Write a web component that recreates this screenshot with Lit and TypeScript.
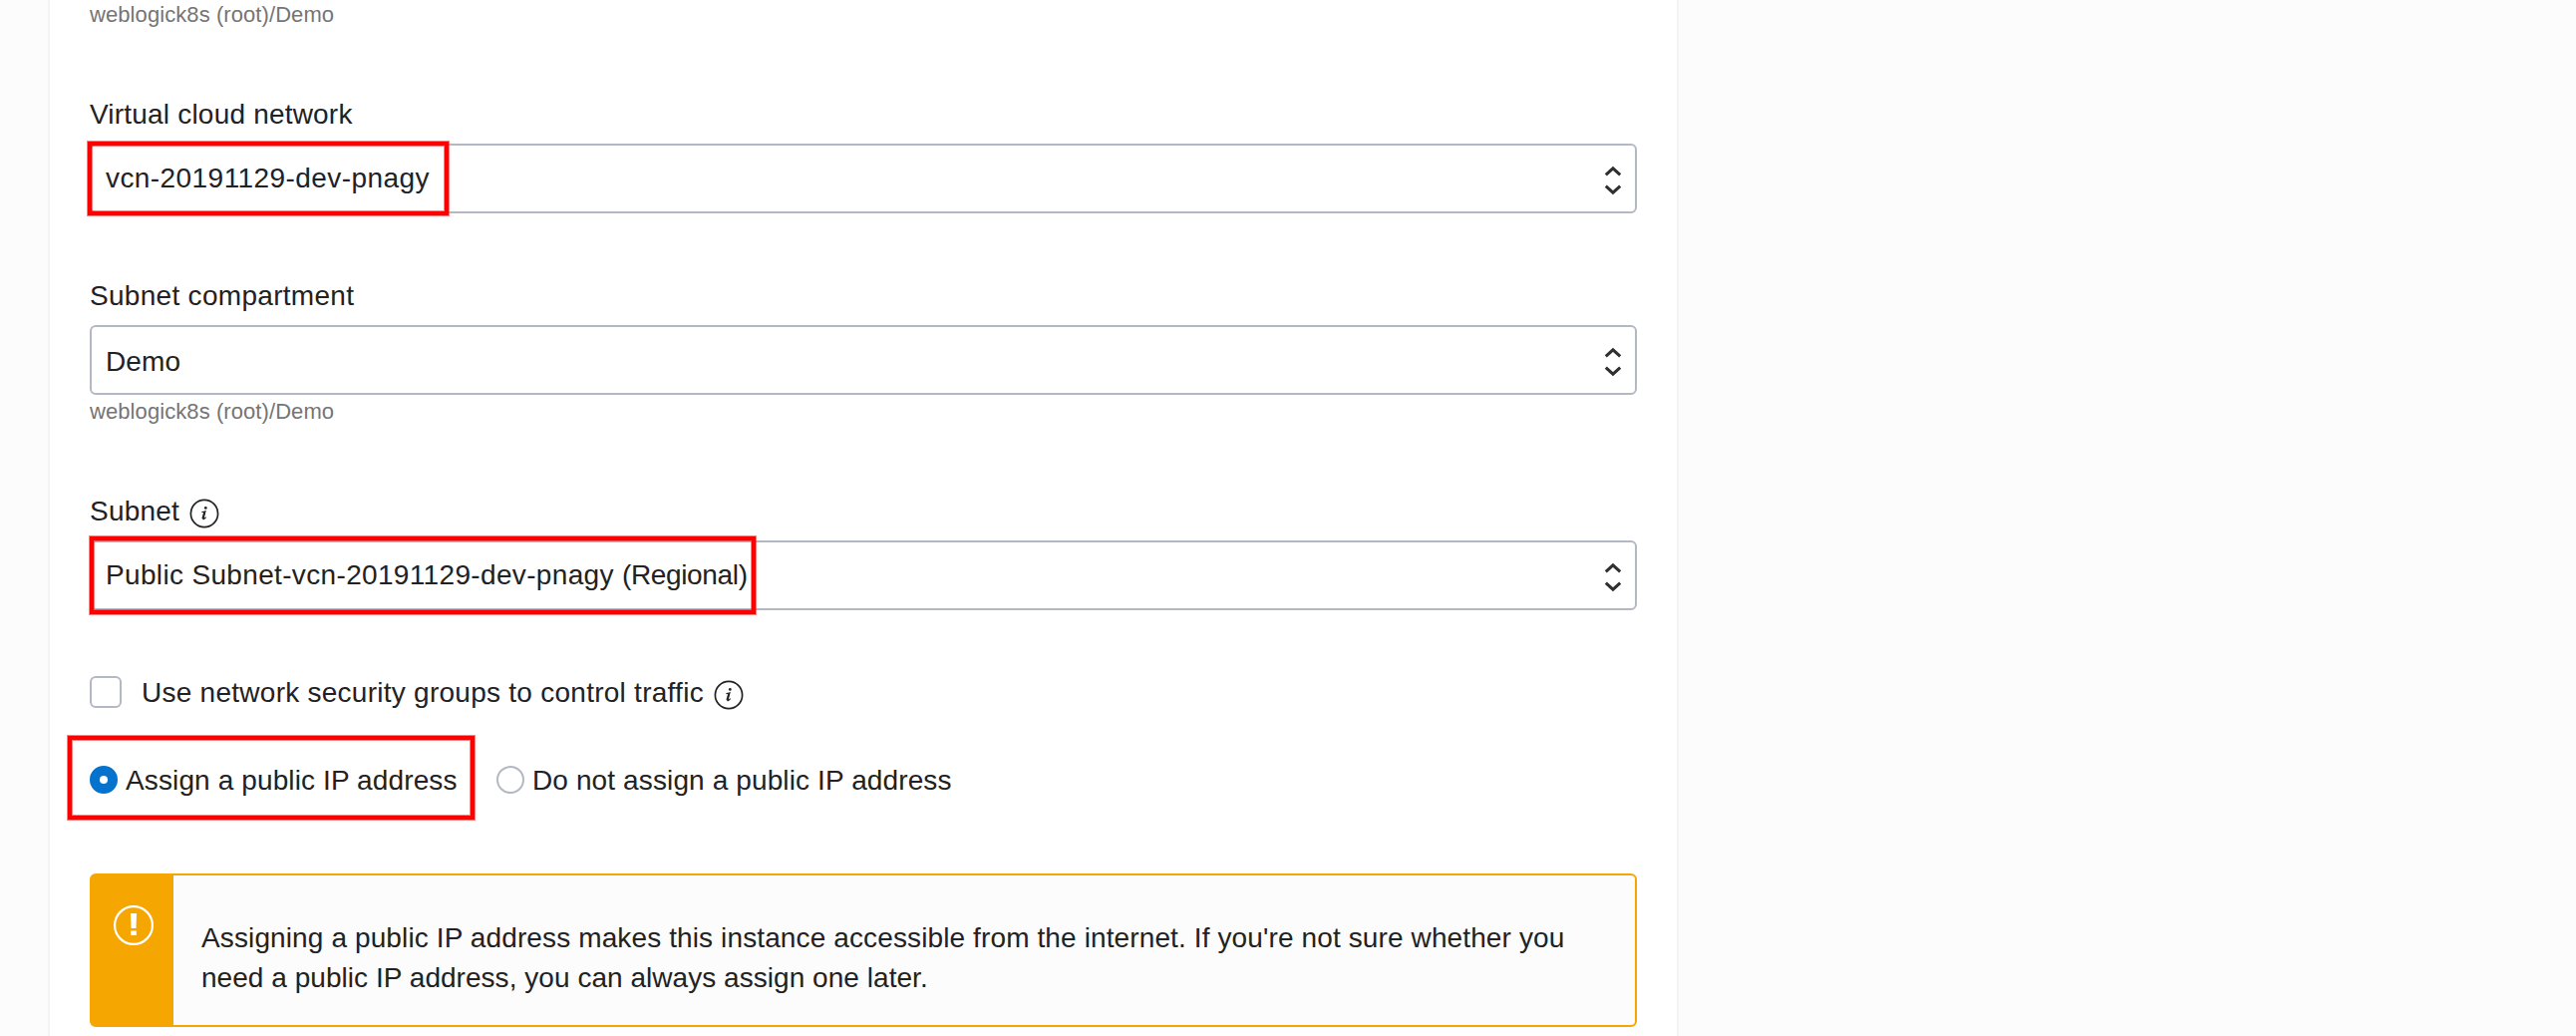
import { LitElement, html, css, svg } from "lit";
import { customElement, property } from "lit/decorators.js";

@customElement("info-icon")
export class InfoIcon extends LitElement {
  static styles = css`
    :host { display: block; width: 30px; height: 30px; flex: none; }
    svg { display: block; }
  `;
  render() {
    return html`<svg width="30" height="30" viewBox="0 0 30 30" fill="none">
      <circle cx="15" cy="15" r="13.6" stroke="#222" stroke-width="1.7" />
      <circle cx="16.3" cy="9.4" r="1.4" fill="#222" />
      <path d="M12.4 13.7 C13.6 13.4 14.8 13.1 16 12.7 L14 19.8 C13.7 21 14.3 21.1 16.6 18.6" stroke="#222" stroke-width="1.2" />
      <path d="M15.2 13.2 L13.3 20.3" stroke="#222" stroke-width="1.8" />
    </svg>`;
  }
}

@customElement("select-field")
export class SelectField extends LitElement {
  @property() value = "";
  @property() suffix = "";
  static styles = css`
    :host { display: block; }
    .box {
      box-sizing: border-box; height: 70px; border: 2px solid #b3b8c3; border-radius: 6px;
      background: #fff; display: flex; align-items: center; justify-content: space-between;
      padding: var(--drop, 0) 13px 0 14px;
    }
    .value { line-height: 40px; white-space: pre; margin-top: -1px; }
    .suffix { letter-spacing: -0.35px; }
    .arrows { display: block; flex: none; margin-top: calc(4px - var(--drop, 0px)); }
  `;
  render() {
    return html`<div class="box">
      <span class="value">${this.value}<span class="suffix">${this.suffix}</span></span>
      <svg class="arrows" width="18" height="30" viewBox="0 0 18 30" fill="none">
        ${svg`<path d="M1.8 9.3 L9 2.9 L16.2 9.3 M1.8 20.7 L9 27.1 L16.2 20.7" stroke="#303030" stroke-width="3.1"/>`}
      </svg>
    </div>`;
  }
}

@customElement("app-root")
export class AppRoot extends LitElement {
  static styles = css`
    :host {
      display: block; height: 1039px; overflow: hidden; background: #fcfcfc; color: #222;
      font: 28px "Liberation Sans", Arial, sans-serif; letter-spacing: 0.3px;
    }
    .panel {
      box-sizing: border-box; width: 1636px; height: 1039px; margin-left: 48px; padding: 0 40px;
      background: #fff; border: solid #f4f4f4; border-width: 0 2px; position: relative;
    }
    .hint { height: 28px; font-size: 22px; line-height: 30px; color: #757575; white-space: nowrap; letter-spacing: 0.08px; }
    .below { margin-top: 2px; }
    .label { height: 40px; line-height: 42px; white-space: nowrap; display: flex; }
    .vcn { margin-top: 66px; letter-spacing: 0.2px; }
    .compartment { margin-top: 62px; }
    .subnet { margin-top: 66px; letter-spacing: 0.2px; }
    .label + select-field { margin-top: 10px; }
    .f1 { letter-spacing: 0.43px; }
    .f2 { letter-spacing: 0.15px; --drop: 4px; }
    .f3 { letter-spacing: 0.34px; }
    .gap { margin: 8px 0 0 10px; }
    .check { display: flex; margin-top: 62px; height: 40px; line-height: 41px; white-space: nowrap; letter-spacing: 0.26px; }
    .square { box-sizing: border-box; width: 32px; height: 32px; margin: 4px 20px 0 0; border: 2px solid #b3b8c3; border-radius: 6px; }
    .radios { display: flex; align-items: center; height: 40px; margin-top: 48px; line-height: 41px; white-space: nowrap; letter-spacing: 0.12px; }
    .radio { box-sizing: border-box; width: 28px; height: 28px; border: 2px solid #b3b8c3; border-radius: 50%; margin-right: 8px; }
    .radio.on { border: 10px solid #0572ce; }
    .first { width: 372px; }
    .alert {
      box-sizing: border-box; display: flex; height: 154px; margin-top: 74px;
      border: 2px solid #f6a600; border-radius: 6px; background: #fcfcfc;
    }
    .stripe { width: 82px; background: #f6a600; display: flex; justify-content: center; padding: 30px 0 0 2px; box-sizing: border-box; }
    .message { padding: 43px 0 0 28px; line-height: 40px; white-space: nowrap; }
    .line1 { letter-spacing: 0.12px; }
    .line2 { letter-spacing: 0.04px; }
    .mark { position: absolute; box-sizing: border-box; border: 4px solid #f00; outline: 1px solid rgba(255, 0, 0, 0.5); box-shadow: inset 0 0 0 1px rgba(255, 0, 0, 0.5); }
    .m1 { left: 38px; top: 142px; width: 362px; height: 74px; }
    .m2 { left: 40px; top: 538px; width: 668px; height: 78px; }
    .m3 { left: 18px; top: 738px; width: 408px; height: 84px; }
  `;
  render() {
    return html`<main class="panel">
      <div class="hint">weblogick8s (root)/Demo</div>
      <div class="label vcn">Virtual cloud network</div>
      <select-field class="f1" value="vcn-20191129-dev-pnagy"></select-field>
      <div class="label compartment">Subnet compartment</div>
      <select-field class="f2" value="Demo"></select-field>
      <div class="hint below">weblogick8s (root)/Demo</div>
      <div class="label subnet">Subnet<info-icon class="gap"></info-icon></div>
      <select-field class="f3" value="Public Subnet-vcn-20191129-dev-pnagy " suffix="(Regional)"></select-field>
      <div class="check">
        <span class="square"></span><span class="nsg">Use network security groups to control traffic</span><info-icon class="gap"></info-icon>
      </div>
      <div class="radios">
        <span class="radio on"></span><span class="first">Assign a public IP address</span>
        <span class="radio"></span><span class="second">Do not assign a public IP address</span>
      </div>
      <div class="alert">
        <div class="stripe">
          <svg width="40" height="40" viewBox="0 0 40 40" fill="none">
            <circle cx="20" cy="20" r="18.9" stroke="#fff" stroke-width="2.2" />
            <path d="M17 8h6l-.5 15h-5z M17.2 25.4h5.6v4.6h-5.6z" fill="#fff" />
          </svg>
        </div>
        <div class="message">
          <div class="line1">Assigning a public IP address makes this instance accessible from the internet. If you're not sure whether you</div>
          <div class="line2">need a public IP address, you can always assign one later.</div>
        </div>
      </div>
      <div class="mark m1"></div>
      <div class="mark m2"></div>
      <div class="mark m3"></div>
    </main>`;
  }
}
